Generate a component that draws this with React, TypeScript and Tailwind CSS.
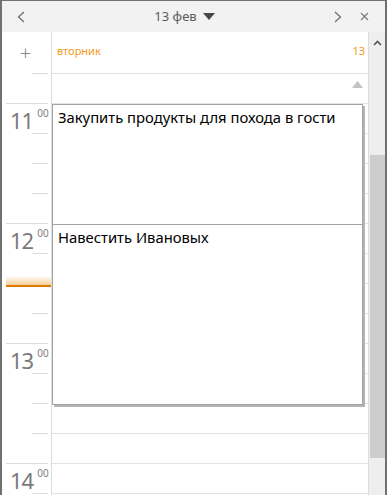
const font = { fontFamily: '"Noto Sans", "Open Sans", sans-serif' };

const hours = ["11", "12", "13", "14"];

const Chevron = ({ dir }: { dir: "left" | "right" | "up" }) => {
  if (dir === "up")
    return (
      <svg width="9" height="6" viewBox="0 0 9 6">
        <polyline points="1,5 4.5,1.5 8,5" fill="none" stroke="#555" strokeWidth="1.6" />
      </svg>
    );
  return (
    <svg width="8" height="12" viewBox="0 0 8 12">
      <polyline
        points={dir === "left" ? "7,1 1.5,6 7,11" : "1,1 6.5,6 1,11"}
        fill="none"
        stroke="#6b6b6b"
        strokeWidth="1.2"
      />
    </svg>
  );
};

const HourBlock = ({ h }: { h: string }) => (
  <div className="flex flex-col">
    {[0, 1, 2, 3].map((i) => (
      <div key={i} className="flex h-[30px]">
        <div className="w-[50px] flex flex-col border-r border-[#dcdcdc]">
          <div className="flex-1 flex items-start pl-[8px] pt-[3px]">
            {i === 0 && (
              <>
                <span className="text-[22px] leading-[26px] text-[#7a7a7a] tracking-[-1px]">{h}</span>
                <span className="text-[10px] leading-[12px] text-[#808080] ml-[4px] mt-[0px]">00</span>
              </>
            )}
          </div>
          <div className={i === 3 ? "h-px bg-[#dcdcdc] ml-[4px] mr-[3px]" : "h-px bg-[#dcdcdc] ml-[30px] mr-[3px]"} />
        </div>
        <div className="flex-1 border-b border-[#e2e2e2]" />
      </div>
    ))}
  </div>
);

const Event = ({ top, height, title }: { top: number; height: number; title: string }) => (
  <div
    className="absolute left-[50px] w-[311px] bg-white border border-[#a3a3a3] shadow-[2px_2px_0_#b4b4b4] px-[5px] pt-[1px] text-[14.8px] text-black"
    style={{ top, height }}
  >
    {title}
  </div>
);

export default function App() {
  return (
    <div
      className="w-[387px] h-[495px] flex flex-col overflow-hidden bg-white border-x-2 border-t border-[#707070]"
      style={font}
    >
      <div className="h-[31px] shrink-0 bg-[#f2f2f2] flex items-center relative">
        <div className="ml-[15px]">
          <Chevron dir="left" />
        </div>
        <div className="flex-1 flex items-center justify-center gap-[6px] pl-[10px]">
          <span className="text-[13px] text-[#5a5a5a]">13 фев</span>
          <svg width="12" height="7" viewBox="0 0 12 7">
            <polygon points="0,0 12,0 6,7" fill="#474747" />
          </svg>
        </div>
        <div className="mr-[18px]">
          <Chevron dir="right" />
        </div>
        <svg width="9" height="9" viewBox="0 0 9 9" className="mr-[16px]">
          <path d="M1 1 L8 8 M8 1 L1 8" stroke="#7a7a7a" strokeWidth="1.2" />
        </svg>
      </div>

      <div className="flex flex-1 min-h-0">
        <div className="flex-1 min-w-0 flex flex-col border-r border-[#dcdcdc] overflow-hidden">
          <div className="flex h-[42px] shrink-0">
            <div className="w-[50px] flex flex-col border-r border-[#dcdcdc]">
              <div className="flex-1 flex items-center justify-center pr-[2px] text-[20px] font-light text-[#8a8a8a] leading-none">
                +
              </div>
              <div className="h-px bg-[#dcdcdc] ml-[30px] mr-[3px]" />
            </div>
            <div className="flex-1 flex items-center justify-between pl-[5px] pr-[3px] pb-[2px] border-b border-[#e0e0e0] text-[11px] text-[#f29a1c]">
              <span>вторник</span>
              <span>13</span>
            </div>
          </div>

          <div className="flex h-[30px] shrink-0">
            <div className="w-[50px] flex flex-col justify-end border-r border-[#dcdcdc]">
              <div className="h-px bg-[#dcdcdc] ml-[4px] mr-[3px]" />
            </div>
            <div className="flex-1 flex justify-end pt-[7px] pr-[5px] border-b border-[#e2e2e2]">
              <svg width="11" height="7" viewBox="0 0 11 7">
                <polygon points="0,7 11,7 5.5,0" fill="#c3c3c3" />
              </svg>
            </div>
          </div>

          <div className="relative">
            {hours.map((h) => (
              <HourBlock key={h} h={h} />
            ))}
            <div className="absolute left-[4px] w-[45px] top-[172px] h-[9px] bg-gradient-to-b from-white to-[#f3cf95]" />
            <div className="absolute left-[4px] w-[45px] top-[181px] h-[2px] bg-[#e07a00]" />
            <Event top={0} height={121} title="Закупить продукты для похода в гости" />
            <Event top={120} height={181} title="Навестить Ивановых" />
          </div>
        </div>

        <div className="w-[16px] shrink-0 bg-[#eeeeee] flex flex-col items-center">
          <div className="h-[14px] flex items-end">
            <Chevron dir="up" />
          </div>
          <div className="mt-[109px] w-[15px] h-[303px] bg-[#cdcdcd]" />
        </div>
      </div>
    </div>
  );
}
